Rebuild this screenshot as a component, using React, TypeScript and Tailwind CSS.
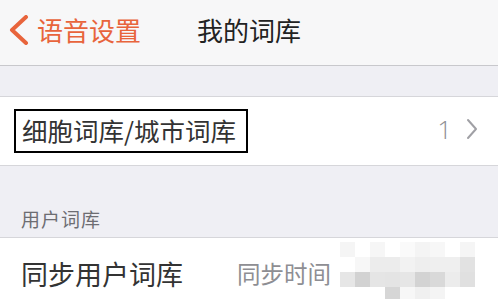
import React from "react";

const mosaic: string[][] = [
  ["bg-[#f5f5f5]", "bg-[#ffffff]", "bg-[#f6f6f6]", "bg-[#ffffff]", "bg-[#fafafa]", "bg-[#f4f4f4]", "bg-[#f7f7f7]", "bg-[#ffffff]", "bg-[#f5f5f5]"],
  ["bg-[#ffffff]", "bg-[#f7f7f7]", "bg-[#ececec]", "bg-[#ececec]", "bg-[#f2f2f2]", "bg-[#eeeeee]", "bg-[#efefef]", "bg-[#efefef]", "bg-[#e2e2e2]"],
  ["bg-[#e6e6e6]", "bg-[#d2d2d2]", "bg-[#e5e5e5]", "bg-[#e4e4e4]", "bg-[#e6e6e6]", "bg-[#d3d3d3]", "bg-[#d9d9d9]", "bg-[#ececec]", "bg-[#e0e0e0]"],
  ["bg-[#ffffff]", "bg-[#ffffff]", "bg-[#ffffff]", "bg-[#d6d6d6]", "bg-[#f7f7f7]", "bg-[#f0f0f0]", "bg-[#f4f4f4]", "bg-[#ffffff]", "bg-[#ffffff]"],
];

export default function App() {
  return (
    <div
      className="w-[498px] h-[299px] overflow-hidden bg-[#efeff4] flex flex-col"
      style={{ fontFamily: '"Noto Sans CJK SC", "Noto Sans", sans-serif' }}
    >
      {/* Nav bar */}
      <div className="h-[66px] shrink-0 bg-[#f7f7f8] border-b border-[#c8c8cc] relative flex items-center">
        <div className="flex items-center pl-[8px] pb-[6px]">
          <svg width="22" height="30" viewBox="0 0 22 30" className="shrink-0">
            <polyline
              points="18,2 4,15 18,28"
              fill="none"
              stroke="#e8643c"
              strokeWidth="4"
              strokeLinecap="round"
              strokeLinejoin="round"
            />
          </svg>
          <span className="ml-[7px] text-[26px] leading-none text-[#e8643c]">语音设置</span>
        </div>
        <div className="absolute left-0 right-0 top-0 h-[60px] flex items-center justify-center pointer-events-none">
          <span className="text-[26px] leading-none text-[#222222]">我的词库</span>
        </div>
      </div>

      {/* Gap */}
      <div className="h-[30px] shrink-0" />

      {/* Row 1 */}
      <div className="h-[70px] shrink-0 bg-white border-y border-[#d6d6da] flex items-center pl-[14px] pr-[20px]">
        <div className="border-2 border-black h-[44px] w-[234px] flex items-center pl-[6px] pb-[2px]">
          <span className="text-[25.5px] leading-none text-[#333333] whitespace-nowrap">细胞词库/城市词库</span>
        </div>
        <div className="ml-auto flex items-center gap-[14px] pb-[4px]">
          <span className="text-[26px] leading-none text-[#8e8e93]" style={{ fontFamily: '"Open Sans", sans-serif', fontWeight: 300 }}>1</span>
          <svg width="12" height="22" viewBox="0 0 12 22">
            <polyline points="2,2 10,11 2,20" fill="none" stroke="#a0a0a5" strokeWidth="2" strokeLinecap="round" strokeLinejoin="round" />
          </svg>
        </div>
      </div>

      {/* Section header */}
      <div className="h-[71px] shrink-0 flex items-end pl-[21px] pb-[9px]">
        <span className="text-[19px] leading-none text-[#6d6d72] tracking-[1px]">用户词库</span>
      </div>

      {/* Row 2 */}
      <div className="flex-1 bg-white border-t border-[#d6d6da] flex items-start pl-[21px] relative">
        <span className="mt-[22px] text-[27px] leading-none text-[#333333] whitespace-nowrap">同步用户词库</span>
        <span className="mt-[24px] ml-[54px] text-[23.5px] leading-none text-[#8e8e93] whitespace-nowrap">同步时间</span>
        <div className="ml-[9px] mt-[4px] flex flex-col">
          {mosaic.map((row, i) => (
            <div key={i} className="flex">
              {row.map((c, j) => (
                <div key={j} className={`w-[15px] h-[15px] ${c}`} />
              ))}
            </div>
          ))}
        </div>
      </div>
    </div>
  );
}
